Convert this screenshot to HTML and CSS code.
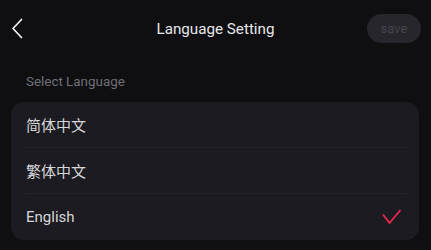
FILE: index.html
```html
<!DOCTYPE html>
<html lang="en">
<head>
<meta charset="utf-8">
<link rel="stylesheet" href="styles.css">
</head>
<body>
<div class="page">
  <header class="header">
    <button class="back" aria-label="back">
      <svg width="12" height="21" viewBox="0 0 12 21"><path d="M10.5 1.5 L2 10.5 L10.5 19.5" fill="none" stroke="#f2f2f4" stroke-width="1.7" stroke-linecap="round" stroke-linejoin="round"/></svg>
    </button>
    <h1 class="title">Language Setting</h1>
    <button class="save">save</button>
  </header>
  <div class="section-label">Select Language</div>
  <ul class="card">
    <li class="row"><span class="row-text">简体中文</span></li>
    <li class="row"><span class="row-text">繁体中文</span></li>
    <li class="row selected"><span class="row-text">English</span>
      <svg class="check" width="20" height="16" viewBox="0 0 20 16"><path d="M1 5.5 L7.5 14 L18.5 1" fill="none" stroke="#e8294c" stroke-width="1.8"/></svg>
    </li>
  </ul>
</div>
</body>
</html>
```
FILE: styles.css
```css
* { box-sizing: border-box; }
html, body { margin: 0; padding: 0; }
body {
  background: #0f0f12;
  font-family: Roboto, "Noto Sans CJK SC", "Liberation Sans", sans-serif;
  width: 431px;
  height: 250px;
  overflow: hidden;
}
.page { display: flex; flex-direction: column; }
.header {
  height: 57px;
  display: flex;
  align-items: center;
  justify-content: space-between;
  padding: 0 10px 0 11px;
  position: relative;
}
.back {
  background: none;
  border: 0;
  padding: 0;
  width: 12px;
  height: 21px;
  display: flex;
}
.title {
  position: absolute;
  left: 0; right: 0;
  top: 0; bottom: 0;
  margin: 0;
  display: flex;
  align-items: center;
  justify-content: center;
  font-size: 15.2px;
  font-weight: 400;
  color: #e6e6e9;
  pointer-events: none;
}
.save {
  width: 54px;
  height: 29px;
  border: 0;
  border-radius: 15px;
  background: #26262c;
  color: #45454c;
  font-family: Roboto, sans-serif;
  font-size: 13px;
  padding: 0;
  position: relative;
}
.section-label {
  padding: 16px 26px 0;
  height: 45px;
  font-size: 13.4px;
  color: #6f6f76;
  line-height: 18px;
}
.card {
  list-style: none;
  margin: 0 12px 0 11px;
  padding: 0;
  background: #1c1b21;
  border-radius: 13px;
}
.row {
  height: 46px;
  display: flex;
  align-items: center;
  justify-content: space-between;
  margin: 0 13px 0 14px;
  padding: 0 4px 0 1px;
  border-bottom: 1px solid #25242a;
  font-size: 15px;
  color: #d6d6da;
}
.row:last-child { border-bottom: 0; }
.check { display: block; }
```
